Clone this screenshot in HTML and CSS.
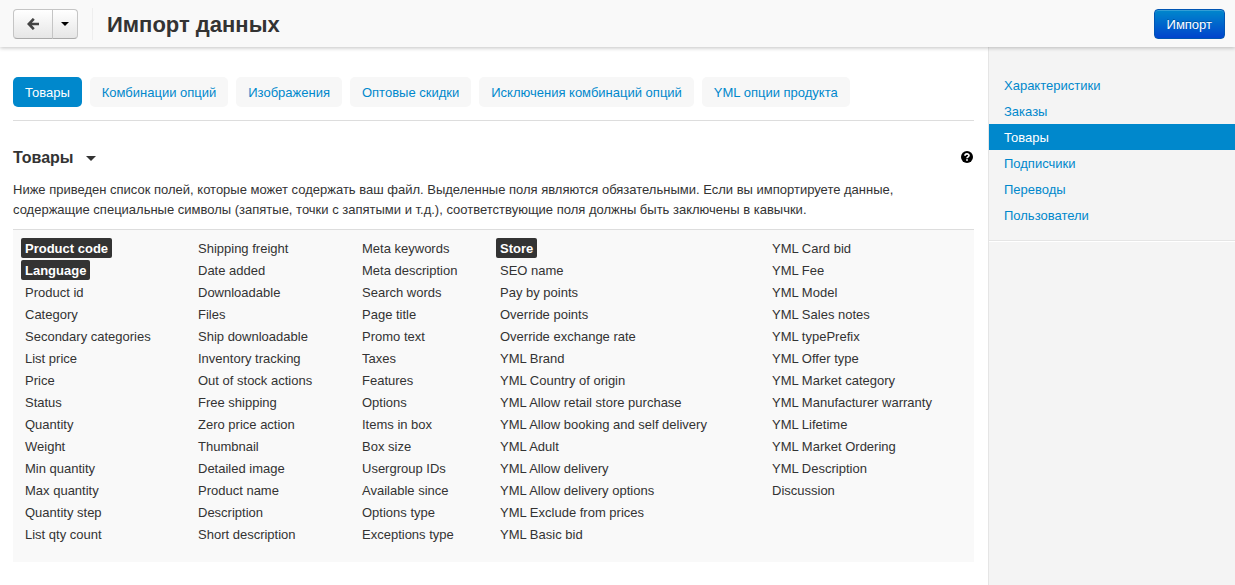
FILE: index.html
```html
<!DOCTYPE html>
<html lang="ru">
<head>
<meta charset="utf-8">
<title>Импорт данных</title>
<link rel="stylesheet" href="styles.css">
</head>
<body>
<header class="topbar">
  <div class="btn-group">
    <button class="btn btn-back" type="button" aria-label="Назад">
      <svg width="12" height="12" viewBox="0 0 12 12" aria-hidden="true"><path d="M6.8 .8 1.8 6l5 5.2M2 6h10" fill="none" stroke="#444" stroke-width="2.6"/></svg>
    </button>
    <button class="btn btn-menu" type="button" aria-label="Меню"><span class="caret"></span></button>
  </div>
  <h1 class="title">Импорт данных</h1>
  <button class="btn-primary" type="submit">Импорт</button>
</header>
<div class="layout">
  <main class="content">
    <nav class="tabs">
      <a class="tab active" href="#products">Товары</a>
      <a class="tab" href="#combinations">Комбинации опций</a>
      <a class="tab" href="#images">Изображения</a>
      <a class="tab" href="#discounts">Оптовые скидки</a>
      <a class="tab" href="#exceptions">Исключения комбинаций опций</a>
      <a class="tab" href="#yml">YML опции продукта</a>
    </nav>
    <section>
      <div class="section-head">
        <h2 class="section-title">Товары <span class="caret"></span></h2>
        <a class="help" href="#help" aria-label="Справка">
          <svg width="12" height="12" viewBox="0 0 12 12" aria-hidden="true"><circle cx="6" cy="6" r="6" fill="#000"/><path d="M4 4.7C4 2.4 8 2.4 8 4.6 8 5.9 6 5.8 6 7.3" fill="none" stroke="#fff" stroke-width="1.7"/><path d="M5.1 8.2h1.8v1.6H5.1z" fill="#fff"/></svg>
        </a>
      </div>
      <p class="intro">Ниже приведен список полей, которые может содержать ваш файл. Выделенные поля являются обязательными. Если вы импортируете данные, содержащие специальные символы (запятые, точки с запятыми и т.д.), соответствующие поля должны быть заключены в кавычки.</p>
      <div class="fields">
        <ul class="column">
          <li><strong>Product code</strong></li><li><strong>Language</strong></li><li>Product id</li><li>Category</li><li>Secondary categories</li><li>List price</li><li>Price</li><li>Status</li><li>Quantity</li><li>Weight</li><li>Min quantity</li><li>Max quantity</li><li>Quantity step</li><li>List qty count</li>
        </ul>
        <ul class="column">
          <li>Shipping freight</li><li>Date added</li><li>Downloadable</li><li>Files</li><li>Ship downloadable</li><li>Inventory tracking</li><li>Out of stock actions</li><li>Free shipping</li><li>Zero price action</li><li>Thumbnail</li><li>Detailed image</li><li>Product name</li><li>Description</li><li>Short description</li>
        </ul>
        <ul class="column">
          <li>Meta keywords</li><li>Meta description</li><li>Search words</li><li>Page title</li><li>Promo text</li><li>Taxes</li><li>Features</li><li>Options</li><li>Items in box</li><li>Box size</li><li>Usergroup IDs</li><li>Available since</li><li>Options type</li><li>Exceptions type</li>
        </ul>
        <ul class="column">
          <li><strong>Store</strong></li><li>SEO name</li><li>Pay by points</li><li>Override points</li><li>Override exchange rate</li><li>YML Brand</li><li>YML Country of origin</li><li>YML Allow retail store purchase</li><li>YML Allow booking and self delivery</li><li>YML Adult</li><li>YML Allow delivery</li><li>YML Allow delivery options</li><li>YML Exclude from prices</li><li>YML Basic bid</li>
        </ul>
        <ul class="column">
          <li>YML Card bid</li><li>YML Fee</li><li>YML Model</li><li>YML Sales notes</li><li>YML typePrefix</li><li>YML Offer type</li><li>YML Market category</li><li>YML Manufacturer warranty</li><li>YML Lifetime</li><li>YML Market Ordering</li><li>YML Description</li><li>Discussion</li>
        </ul>
      </div>
    </section>
  </main>
  <aside class="sidebar">
    <nav class="side-nav">
      <a href="#features">Характеристики</a>
      <a href="#orders">Заказы</a>
      <a class="active" href="#products">Товары</a>
      <a href="#subscribers">Подписчики</a>
      <a href="#translations">Переводы</a>
      <a href="#users">Пользователи</a>
    </nav>
  </aside>
</div>
</body>
</html>
```
FILE: styles.css
```css
* { box-sizing: border-box; }

body {
  display: flex;
  flex-direction: column;
  min-height: 100vh;
  margin: 0;
  background: #fff;
  color: #333;
  font: 13px/20px "Nimbus Sans L", "Liberation Sans", Arial, sans-serif;
}

a { color: #08c; text-decoration: none; }
button { font: inherit; cursor: pointer; }

.topbar {
  position: relative;
  display: flex;
  align-items: center;
  padding: 0 10px 0 13px;
  height: 47px;
  background: #f9f9f9;
  box-shadow: 0 1px 4px rgba(0, 0, 0, 0.24);
}

.btn-group { display: flex; }

.btn {
  display: flex;
  align-items: center;
  justify-content: center;
  height: 30px;
  padding: 0;
  border: 1px solid #c5c5c5;
  border-bottom-color: #aaa;
  background: linear-gradient(#fff, #e6e6e6);
}

.btn-back { width: 40px; border-radius: 4px 0 0 4px; }
.btn-menu { width: 26px; margin-left: -1px; border-radius: 0 4px 4px 0; }
.btn-menu .caret { color: #000; }

.caret {
  display: inline-block;
  border: 5px solid transparent;
  border-top: 5px solid currentColor;
  border-bottom: 0;
}

.btn-menu .caret { border-width: 4px 4px 0; }

.title {
  flex: 1;
  margin: 0 0 0 14px;
  padding: 2px 0 0 14px;
  border-left: 1px solid #eee;
  font-size: 22px;
  line-height: 30px;
}

.btn-primary {
  height: 30px;
  padding: 2px 12px 0;
  border: 1px solid #0055b3;
  border-radius: 4px;
  background: linear-gradient(#08c, #04c);
  box-shadow: inset 0 1px 0 rgba(255, 255, 255, 0.2);
  color: #fff;
  text-shadow: 0 -1px 0 rgba(0, 0, 0, 0.25);
}

.layout { display: flex; flex: 1; }

.content { flex: 1; padding: 30px 14px 20px 13px; }

.tabs {
  display: flex;
  flex-wrap: wrap;
  gap: 8px;
  padding-bottom: 13px;
  border-bottom: 1px solid #ddd;
}

.tab {
  padding: 6px 12px 4px;
  border-radius: 5px;
  background: #f7f7f7;
}

.tab.active { background: #08c; color: #fff; }

.section-head {
  display: flex;
  align-items: center;
  justify-content: space-between;
  margin-top: 25px;
}

.section-title {
  display: flex;
  align-items: center;
  gap: 12px;
  margin: 0;
  padding-top: 2px;
  font-size: 16px;
  line-height: 20px;
}

.help { display: flex; padding-right: 1px; }

.intro { margin: 12px 0 9px; padding-right: 50px; }

.fields {
  display: grid;
  grid-template-columns: 173fr 164fr 138fr 272fr 214fr;
  padding: 8px 0 16px;
  border-top: 1px solid #ddd;
  background: #f9f9f9;
}

.column { margin: 0; padding: 0 0 0 12px; list-style: none; }
.column li { line-height: 22px; }

.column strong {
  display: inline-block;
  margin-left: -4px;
  padding: 2px 4px 0;
  border-radius: 2px;
  background: #333;
  color: #fff;
  line-height: 18px;
}

.sidebar {
  width: 20%;
  border-left: 1px solid #e5e5e5;
  background: #f4f4f4;
}

.side-nav {
  padding: 25px 0 12px;
  border-bottom: 1px solid #e5e5e5;
  box-shadow: 0 1px 0 #fff;
}

.side-nav a { display: block; padding: 4px 15px 2px; }
.side-nav .active { background: #08c; color: #fff; }
```
